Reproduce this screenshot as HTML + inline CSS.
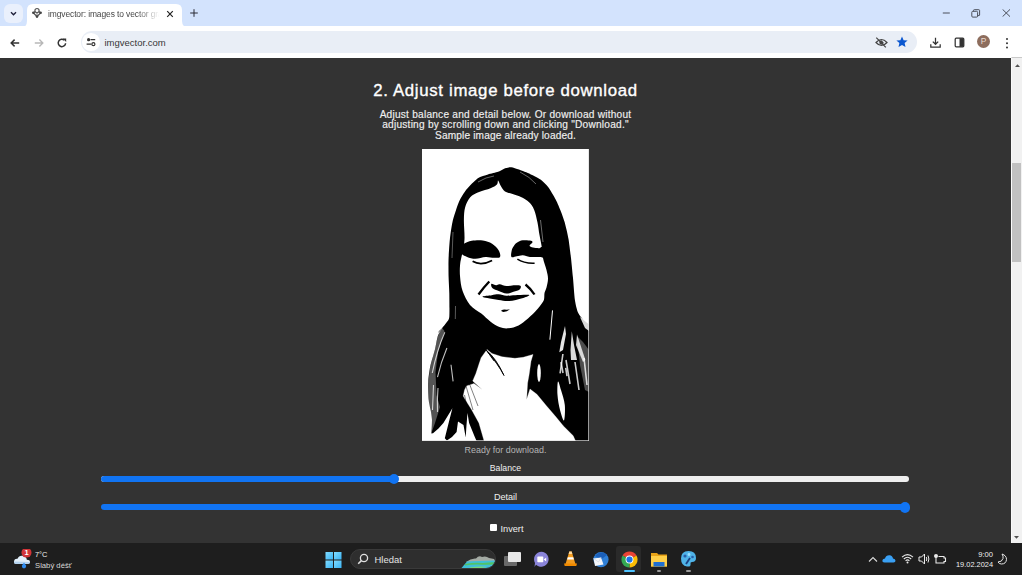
<!DOCTYPE html>
<html><head><meta charset="utf-8">
<style>
*{margin:0;padding:0;box-sizing:border-box}
html,body{width:1024px;height:575px;overflow:hidden;background:#fff;font-family:"Liberation Sans",sans-serif}
.abs{position:absolute}
#tabstrip{left:0;top:0;width:1022px;height:26px;background:#d3e3fd}
#toolbar{left:0;top:28px;width:1022px;height:29px;background:#fff}
#content{left:0;top:58px;width:1011px;height:485px;background:#333}
.cin{position:absolute;left:0;top:-1px;width:1011px;height:486px}
#sb{left:1011px;top:57px;width:11px;height:486px;background:#f1f1f1;border-left:1px solid #fafafa;border-top:1px solid #c9c9c9}
#taskbar{left:0;top:543px;width:1022px;height:32px;background:#1e1e1e}
.t{position:absolute;white-space:nowrap;color:#fff}
</style></head><body>
<div id="tabstrip" class="abs">
  <div class="abs" style="left:4px;top:4.2px;width:19.4px;height:19.2px;border-radius:6px;background:#eaf0fc"></div>
  <svg class="abs" style="left:9px;top:8.6px" width="9" height="9" viewBox="0 0 9 9"><path d="M2 3.2 L4.5 5.7 L7 3.2" fill="none" stroke="#1f1f3a" stroke-width="1.4"/></svg>
  <!-- tab -->
  <svg class="abs" style="left:20px;top:3px" width="170" height="25" viewBox="0 0 170 25">
    <path d="M0 25 Q7 25 7 18 L7 7 Q7 1 13 1 L156 1 Q162 1 162 7 L162 18 Q162 25 170 25 Z" fill="#fff"/>
  </svg>
  <svg class="abs" style="left:31px;top:6px" width="12" height="13" viewBox="0 0 12 13"><circle cx="6" cy="4.6" r="2.1" fill="none" stroke="#555" stroke-width="1.2"/><path d="M4.2 5.6 L2.3 6.8 L6 10.6 L9.7 6.8 L7.8 5.6" fill="none" stroke="#555" stroke-width="1.3"/><path d="M6 6.7 L6 9" stroke="#777" stroke-width="1"/><circle cx="2.4" cy="6.8" r="1.3" fill="#444"/><circle cx="9.6" cy="6.8" r="1.3" fill="#444"/><circle cx="6" cy="10.6" r="1.3" fill="#444"/></svg>
  <div class="t" style="left:48px;top:8.6px;font-size:8.45px;letter-spacing:-0.1px;line-height:10px;color:#474747;width:114px;overflow:hidden;-webkit-mask-image:linear-gradient(90deg,#000 78%,transparent 98%)">imgvector: images to vector graphics</div>
  <svg class="abs" style="left:166px;top:9.5px" width="8" height="8" viewBox="0 0 8 8"><path d="M1.2 1.2 L6.8 6.8 M6.8 1.2 L1.2 6.8" stroke="#222" stroke-width="1.2"/></svg>
  <svg class="abs" style="left:189.3px;top:8.3px" width="10" height="10" viewBox="0 0 10 10"><path d="M5 1.2 L5 8.8 M1.2 5 L8.8 5" stroke="#2a2a35" stroke-width="1"/></svg>
  <!-- window controls -->
  <svg class="abs" style="left:942px;top:8px" width="9" height="10" viewBox="0 0 9 10"><path d="M0.8 5 L7.8 5" stroke="#4a4f5a" stroke-width="1"/></svg>
  <svg class="abs" style="left:971px;top:8.5px" width="10" height="9" viewBox="0 0 10 9"><rect x="0.8" y="2.3" width="5.8" height="5.8" rx="1" fill="none" stroke="#4a4f5a" stroke-width="1"/><path d="M2.5 2.3 L2.5 1.5 Q2.5 0.7 3.3 0.7 L7.8 0.7 Q8.6 0.7 8.6 1.5 L8.6 6 Q8.6 6.6 8 6.6 L6.6 6.6" fill="none" stroke="#4a4f5a" stroke-width="1"/></svg>
  <svg class="abs" style="left:1002px;top:8.7px" width="9" height="8" viewBox="0 0 9 8"><path d="M0.6 0.4 L8 7.6 M8 0.4 L0.6 7.6" stroke="#4a4f5a" stroke-width="1"/></svg>
</div>
<div id="toolbar" class="abs">
  <svg class="abs" style="left:9px;top:9px" width="12" height="12" viewBox="0 0 12 12"><path d="M10.2 6 L2.2 6 M5.6 2.6 L2.2 6 L5.6 9.4" fill="none" stroke="#333" stroke-width="1.5"/></svg>
  <svg class="abs" style="left:32.5px;top:9px" width="12" height="12" viewBox="0 0 12 12"><path d="M1.8 6 L9.8 6 M6.4 2.6 L9.8 6 L6.4 9.4" fill="none" stroke="#b8b8b8" stroke-width="1.4"/></svg>
  <svg class="abs" style="left:56px;top:9px" width="12" height="12" viewBox="0 0 12 12"><path d="M9.6 6.2 A3.7 3.7 0 1 1 8.4 3.2" fill="none" stroke="#333" stroke-width="1.5"/><path d="M6.8 1.6 L10.2 1.6 L10.2 5 Z" fill="#333"/></svg>
  <div class="abs" style="left:80.5px;top:3.4px;width:836.5px;height:21.6px;border-radius:11px;background:#e9eef6"></div>
  <div class="abs" style="left:82.3px;top:5.3px;width:17.5px;height:17.5px;border-radius:50%;background:#fff"></div>
  <svg class="abs" style="left:85px;top:8px" width="12" height="12" viewBox="0 0 12 12"><circle cx="3.6" cy="3.7" r="1.6" fill="#333"/><path d="M5.5 3.7 L10.2 3.7 M1.6 8.2 L6.4 8.2" stroke="#333" stroke-width="1.3"/><circle cx="8.4" cy="8.2" r="1.5" fill="none" stroke="#333" stroke-width="1.2"/></svg>
  <div class="t" style="left:104.5px;top:9.5px;font-size:9.5px;line-height:10px;color:#363636">imgvector.com</div>
  <svg class="abs" style="left:874.5px;top:9px" width="13" height="11" viewBox="0 0 13 11"><path d="M1 5.5 Q6.5 -0.5 12 5.5 Q6.5 11.5 1 5.5 Z" fill="none" stroke="#444" stroke-width="1.2"/><path d="M6.5 3.3 A2.2 2.2 0 1 0 8.7 5.5 Z" fill="#444"/><path d="M1.3 0.6 L10.8 10.4" stroke="#444" stroke-width="1.2"/></svg>
  <svg class="abs" style="left:896px;top:8px" width="12" height="12" viewBox="0 0 12 12"><path d="M6 0.5 L7.6 4.2 L11.6 4.5 L8.6 7.1 L9.5 11 L6 9 L2.5 11 L3.4 7.1 L0.4 4.5 L4.4 4.2 Z" fill="#0b57d0"/></svg>
  <svg class="abs" style="left:930px;top:8.5px" width="11" height="11" viewBox="0 0 11 11"><path d="M5.5 0.8 L5.5 7.2 M2.8 4.6 L5.5 7.3 L8.2 4.6 M0.8 7.3 L0.8 10 L10.2 10 L10.2 7.3" fill="none" stroke="#333" stroke-width="1.25"/></svg>
  <svg class="abs" style="left:954px;top:9px" width="11" height="11" viewBox="0 0 11 11"><rect x="1.2" y="1.2" width="8.6" height="8.6" rx="1" fill="none" stroke="#333" stroke-width="1.25"/><rect x="5.5" y="1.2" width="4.3" height="8.6" fill="#333"/></svg>
  <div class="abs" style="left:977px;top:7.3px;width:13px;height:13px;border-radius:50%;background:#8d6d5d"></div>
  <div class="t" style="left:980.8px;top:9.3px;font-size:8.4px;line-height:9px;color:#eadbd3">P</div>
  <div class="abs" style="left:1005.8px;top:9.6px;width:2.5px;height:2.5px;border-radius:50%;background:#333;box-shadow:0 4.2px 0 #333,0 8.4px 0 #333"></div>
</div>
<div id="content" class="abs"><div class="cin">
  <div class="t" style="left:0;width:1011px;text-align:center;top:24.6px;font-size:16.8px;line-height:17px;font-weight:400;-webkit-text-stroke:0.35px #fff;color:#fff;letter-spacing:0.68px">2. Adjust image before download</div>
  <div class="t" style="left:0;width:1011px;text-align:center;top:52.6px;font-size:10.15px;letter-spacing:0.23px;line-height:10.6px;color:#f0f0f0;-webkit-text-stroke:0.15px #f0f0f0">Adjust balance and detail below. Or download without<br>adjusting by scrolling down and clicking "Download."<br><span style="letter-spacing:0.15px">Sample image already loaded.</span></div>
  <div class="abs" id="img" style="left:422px;top:92px;width:167px;height:292px;background:#fff"><svg class="abs" style="left:0;top:0" width="167" height="292" viewBox="422 149 167 292">
<rect x="422" y="149" width="167" height="292" fill="#fff"/>
<path d="M431.0 412.0C430.7 410.6 429.0 403.5 428.7 400.0C428.4 396.5 428.0 385.7 428.2 381.7C428.4 377.7 429.5 369.8 430.3 366.1C431.1 362.4 433.9 353.5 434.8 350.0C435.7 346.5 437.0 338.5 437.8 336.0C438.6 333.5 441.0 330.1 442.0 328.5C443.0 326.9 445.6 323.8 446.5 322.5C447.4 321.2 449.0 320.4 449.3 317.0C449.6 313.6 449.4 297.7 449.3 293.0C449.2 288.3 448.7 281.2 448.6 277.1C448.5 273.0 448.4 262.4 448.6 258.0C448.8 253.6 449.4 243.2 449.9 239.0C450.4 234.8 451.5 226.3 452.5 222.0C453.5 217.7 457.2 206.1 458.8 202.3C460.4 198.5 464.2 192.4 466.4 189.6C468.6 186.8 475.3 180.0 477.8 178.2C480.3 176.4 485.6 175.1 488.0 174.4C490.4 173.7 496.3 172.4 498.1 171.8C499.9 171.2 502.3 169.7 503.2 169.3C504.1 168.9 505.1 168.2 506.0 168.0C506.9 167.8 509.8 167.0 511.3 167.2C512.8 167.4 516.8 168.8 519.0 169.6C521.2 170.4 527.9 173.0 530.4 174.2C532.9 175.4 538.4 178.0 540.5 179.5C542.6 181.0 546.3 184.7 548.1 187.1C549.9 189.5 554.3 197.0 555.8 199.8C557.3 202.6 559.8 208.6 560.8 211.2C561.8 213.8 563.7 218.8 564.6 222.0C565.5 225.2 567.8 234.8 568.5 239.0C569.2 243.2 570.5 253.6 571.0 258.0C571.5 262.4 572.4 272.2 572.9 277.1C573.4 282.0 574.3 295.9 574.9 300.0C575.5 304.1 577.0 310.2 578.0 312.5C579.0 314.8 581.9 318.3 583.3 319.8C584.7 321.3 589.2 324.4 590.0 325.0L590.0 442.0L484.4 442.0L477.0 442.0L474.7 436.8L469.1 422.9L467.5 413.0L466.5 425.0L465.7 437.5L463.5 425.0L458.0 421.5L456.6 432.0L452.0 437.0L446.9 440.5L444.8 438.2L449.0 421.5L452.4 408.3L443.4 422.9L438.5 428.4L433.0 433.3L431.4 433.5L432.0 420.0Z" fill="#000"/>
<path d="M533.0 354.4 L531.0 361.2 L529.1 374.8 L527.6 383.0 L526.6 399.6 L530.0 389.0 L536.9 394.3 L546.6 406.0 L555.0 415.8 L563.4 426.0 L573.2 435.7 L576.0 442.0 L484.4 442.0 L478.9 422.9 L471.2 409.0 L465.5 400.0 L463.2 396.0 L464.5 390.0 L466.5 385.9 L474.0 383.5 L482.1 389.5 L472.7 381.0 L475.9 373.4 L479.0 364.0 L481.1 357.7 L487.0 349.5 L492.0 353.5 L502.0 356.7 L515.0 358.3 L523.2 357.3Z" fill="#fff" stroke="#fff" stroke-width="0.3"/>
<path d="M498.1 180.5C498.7 180.7 499.6 184.0 500.7 185.8C501.8 187.6 503.0 190.1 505.0 191.5C507.0 192.9 509.9 193.1 512.6 194.0C515.4 194.9 518.8 195.8 521.5 197.2C524.2 198.6 527.0 200.2 529.1 202.3C531.2 204.4 532.8 206.6 534.2 209.9C535.6 213.2 536.5 217.8 537.4 222.0C538.3 226.2 538.8 231.1 539.5 235.0C540.2 238.9 540.9 241.6 541.5 245.4C542.1 249.2 542.2 253.9 543.0 258.0C543.8 262.1 545.7 266.6 546.5 270.0C547.3 273.4 548.0 275.8 548.0 278.7C548.0 281.6 547.1 285.0 546.5 287.4C545.9 289.8 544.9 290.9 544.5 293.0C544.1 295.1 544.6 297.8 543.9 300.0C543.1 302.2 541.4 304.1 540.0 306.0C538.6 307.9 537.5 309.2 535.5 311.3C533.5 313.4 530.8 316.1 528.0 318.5C525.2 320.9 521.8 323.8 518.5 325.4C515.2 327.0 511.6 328.0 508.4 328.3C505.2 328.6 502.4 328.2 499.4 327.1C496.4 326.0 493.3 323.8 490.3 321.5C487.3 319.2 484.7 316.4 481.3 313.6C477.9 310.9 473.1 308.8 470.0 305.0C466.9 301.2 464.2 295.6 462.6 291.0C461.0 286.4 460.5 281.5 460.1 277.1C459.7 272.7 459.7 268.6 460.1 264.4C460.5 260.2 461.9 255.9 462.6 251.7C463.3 247.5 464.3 244.3 464.5 239.0C464.7 233.7 463.8 225.3 463.9 220.0C464.0 214.7 464.1 211.2 465.1 207.4C466.2 203.6 467.9 199.8 470.2 197.2C472.5 194.6 475.7 193.6 479.1 192.1C482.5 190.6 487.5 189.6 490.5 188.3C493.5 187.0 495.6 185.8 496.9 184.5C498.2 183.2 497.5 180.3 498.1 180.5Z" fill="#fff"/>
<path d="M460.0 246.0C460.6 244.4 462.4 244.4 464.3 243.5C466.2 242.6 468.6 241.3 471.7 240.8C474.8 240.3 479.4 240.0 482.8 240.5C486.2 241.0 489.5 242.1 492.1 243.7C494.7 245.3 497.3 248.0 498.6 250.2C499.9 252.4 500.8 255.6 500.0 256.9C499.2 258.2 496.4 257.8 494.0 257.8C491.6 257.8 488.7 256.8 485.6 257.0C482.5 257.2 478.5 258.8 475.4 258.8C472.3 258.8 469.5 258.0 467.1 257.0C464.7 256.0 462.2 254.8 461.0 253.0C459.8 251.2 459.4 247.6 460.0 246.0Z" fill="#000"/>
<path d="M511.6 251.0C511.9 249.2 512.6 247.9 513.5 246.5C514.4 245.1 515.2 243.7 516.8 242.7C518.3 241.7 520.4 240.6 522.8 240.3C525.2 240.0 529.4 240.3 531.0 240.7C532.6 241.1 532.6 241.8 532.4 242.6C532.1 243.4 529.4 245.0 529.5 245.8C529.6 246.6 531.4 247.2 533.0 247.6C534.6 248.0 537.9 248.3 539.3 248.2C540.7 248.1 540.5 246.9 541.5 247.0C542.5 247.1 544.6 247.2 545.0 249.0C545.4 250.8 544.8 256.2 544.0 257.5C543.2 258.8 542.9 257.1 540.5 257.0C538.1 256.9 532.9 257.2 529.9 256.9C526.9 256.6 525.0 255.3 522.8 255.2C520.6 255.1 518.7 256.0 516.8 256.3C514.9 256.6 512.4 257.9 511.5 257.0C510.6 256.1 511.3 252.8 511.6 251.0Z" fill="#000"/>
<path d="M472.6 261.3 Q481 266.2 492.1 260.4" fill="none" stroke="#000" stroke-width="1.7"/>
<path d="M517.4 259.2 Q524 263.6 534.6 263.2" fill="none" stroke="#000" stroke-width="1.5"/>
<path d="M491.3 283.9C491.9 283.4 494.7 285.1 496.1 285.2C497.5 285.3 497.9 284.1 499.6 284.3C501.3 284.5 504.2 286.0 506.5 286.1C508.8 286.2 511.2 285.3 513.5 285.2C515.8 285.1 519.4 285.0 520.4 285.7C521.4 286.4 520.8 288.6 519.6 289.6C518.5 290.6 515.7 291.1 513.5 291.7C511.3 292.3 509.0 293.6 506.5 293.5C504.0 293.4 501.0 291.8 498.7 290.9C496.4 290.0 493.8 289.5 492.6 288.3C491.4 287.1 490.7 284.4 491.3 283.9Z" fill="#000"/>
<path d="M478.5 294.5 Q484 287 489.3 281.5" fill="none" stroke="#000" stroke-width="2.3"/>
<path d="M525.5 284.5 Q531 289 534.5 294.5" fill="none" stroke="#000" stroke-width="2.3"/>
<path d="M482.6 296.5C483.3 296.0 489.0 295.6 491.7 295.2C494.4 294.8 496.2 294.2 498.7 294.3C501.2 294.4 503.8 295.6 506.5 295.7C509.2 295.8 511.4 295.3 515.2 295.2C519.0 295.1 527.9 294.5 529.1 295.0C530.3 295.5 525.5 297.2 522.2 298.2C518.9 299.2 513.0 300.7 509.1 301.0C505.2 301.3 502.3 300.5 498.7 300.0C495.1 299.5 490.1 298.6 487.4 298.0C484.7 297.4 481.9 297.0 482.6 296.5Z" fill="#000"/>
<path d="M501 310.8 Q503.5 308.8 506.5 309.8 Q509 309.6 510 309.2 Q507 311.8 503.5 312 Q501.8 311.8 501 310.8 Z" fill="#000"/>
<path d="M486.3 350.2 Q496 358 504 375.5 Q498 364 486.3 350.2 Z" fill="#000" stroke="#000" stroke-width="0.9"/>
<path d="M486.6 350.4 L494 360.9" stroke="#000" stroke-width="1"/>
<path d="M558.0 381.5C558.6 380.7 559.9 386.1 561.0 390.0C562.1 393.9 564.3 399.9 564.8 405.0C565.3 410.1 564.8 419.6 564.0 420.4C563.2 421.2 561.1 414.2 560.0 410.0C558.9 405.8 557.8 399.8 557.5 395.0C557.2 390.2 557.4 382.3 558.0 381.5Z" fill="#fff"/>
<ellipse cx="539" cy="373" rx="1.8" ry="9" fill="#fff"/>
<path d="M552.5 310.4 L549.9 339.7" stroke="#fff" stroke-width="1"/>
<path d="M540.5 220 L543 242" stroke="#fff" stroke-width="0.7" opacity="0.6"/>
<path d="M565 326 L561 342 L559.3 352.2 L563 350 L566 334 Z" fill="#fff" opacity="0.9"/>
<path d="M571.8 331.3 L570.5 350 L571 360 L577 360 L574 345 Z" fill="#fff" opacity="0.85"/>
<path d="M577 334.4 L585.4 360 L583 362 L576 345 Z" fill="#fff" opacity="0.8"/>
<path d="M561 362 L563 373 M566 360 L570 384 M575 362 L579 390 M584 358 L587 385" stroke="#fff" stroke-width="1.6" opacity="0.8"/>
<path d="M580 317 L589 322 L589 331 L585 328 Z" fill="#fff" opacity="0.85"/><path d="M577 336 L583 342 L589 350 L589 392 L585 390 L580 365 Z" fill="#fff" opacity="0.3"/><path d="M562.9 354 L560.1 373.4 M565.7 367.9 L567 376.2" stroke="#fff" stroke-width="1.6" opacity="0.8"/>
<path d="M453 232 L452 258 M455.5 306 L455.3 319" stroke="#fff" stroke-width="0.7" opacity="0.5"/><path d="M446 325 L438.5 332 M447 327 L440 336" stroke="#000" stroke-width="0.8"/>
<path d="M478 182 Q486 177 494 176 M520 172 Q530 177 536 184" stroke="#fff" stroke-width="0.8" opacity="0.5" fill="none"/>
<path d="M441.7 327.5 L444.5 331 L438 352 L435.5 372 L436.5 395 L440 407 L435 422.9 L431.6 432.6 L430.5 420 L428.5 400 L428.3 382 L430.3 366 L434.6 350.5 L437.8 336.5 Z" fill="#fff" opacity="0.33"/>
<path d="M444.8 332.3 Q437 350 432.3 373 M446.9 348 Q441 362 437.5 377.2 M451 364.7 L453.1 381.4 M433.5 385 L432.5 410 M438 388 Q437 400 437.5 412" stroke="#fff" stroke-width="1.1" opacity="0.75" fill="none"/>
<path d="M466 386 L473 410 M469.5 384 L478 406 M464.5 395 L468 412" stroke="#000" stroke-width="0.9" opacity="0.55"/>
<rect x="588.3" y="149" width="0.7" height="292" fill="#ddd"/>
<rect x="422" y="440.3" width="167" height="0.7" fill="#ddd"/>
</svg></div>
  <div class="t" style="left:0;width:1011px;text-align:center;top:389.4px;font-size:8.94px;line-height:9px;color:#b4b4b4">Ready for download.</div>
  <div class="t" style="left:0;width:1011px;text-align:center;top:407.4px;font-size:8.7px;line-height:9px;color:#f0f0f0">Balance</div>
  <div class="abs" style="left:101px;top:419px;width:808px;height:5.8px;border-radius:3px;background:#efefef"></div>
  <div class="abs" style="left:101px;top:419px;width:293px;height:5.8px;border-radius:3px 0 0 3px;background:#1174f3"></div>
  <div class="abs" style="left:389px;top:417px;width:10px;height:10px;border-radius:50%;background:#1174f3"></div>
  <div class="t" style="left:0;width:1011px;text-align:center;top:436.2px;font-size:9.1px;line-height:9px;color:#f0f0f0">Detail</div>
  <div class="abs" style="left:101px;top:447px;width:806px;height:6.2px;border-radius:3px;background:#1174f3"></div>
  <div class="abs" style="left:899.5px;top:445px;width:10.5px;height:10.5px;border-radius:50%;background:#1174f3"></div>
  <div class="abs" style="left:490px;top:466.5px;width:7px;height:7px;background:#fff;border-radius:1px"></div>
  <div class="t" style="left:500.5px;top:468.2px;font-size:9.2px;line-height:9px;color:#f0f0f0">Invert</div>
</div></div>
<div id="sb" class="abs">
  <svg class="abs" style="left:2px;top:4.5px" width="7" height="5" viewBox="0 0 7 5"><path d="M1 4 L3.5 1.2 L6 4 Z" fill="#505050"/></svg>
  <div class="abs" style="left:0px;top:105px;width:9px;height:99px;background:#c1c1c1"></div>
  <svg class="abs" style="left:1px;top:477px" width="7" height="5" viewBox="0 0 7 5"><path d="M1 1 L3.5 3.8 L6 1 Z" fill="#505050"/></svg>
</div>
<div id="taskbar" class="abs">
  <!-- weather -->
  <svg class="abs" style="left:10px;top:6px" width="26" height="22" viewBox="0 0 26 22">
    <path d="M6.5 15 Q3.5 15 4 12 Q4.5 9.5 7.5 9.8 Q9 6 13 6.8 Q16.5 7.6 16.8 10.8 Q20 10.8 20 13.2 Q20 15 17.5 15 Z" fill="#e3f0fb"/>
    <path d="M6.5 15 Q3.5 15 4 12.5 L20 13 Q20 15 17.5 15 Z" fill="#b5d3ef"/>
    <path d="M14 13.5 L16 16.5 A2.1 2.1 0 1 1 12 16.5 Z" fill="#2f8cf0"/>
    <circle cx="16.5" cy="3.6" r="5" fill="#d13438"/>
    <text x="16.5" y="6.4" font-size="7.5" font-family="Liberation Sans" fill="#fff" text-anchor="middle" font-weight="700">1</text>
  </svg>
  <div class="t" style="left:35px;top:8px;font-size:7.4px;line-height:8px;color:#f2f2f2">7°C</div>
  <div class="t" style="left:35px;top:18.5px;font-size:7.7px;line-height:8px;color:#d8d8d8">Slabý déšť</div>
  <!-- start -->
  <svg class="abs" style="left:325px;top:8.5px" width="17" height="16" viewBox="0 0 17 16">
    <defs><linearGradient id="wg" x1="0" y1="0" x2="1" y2="1"><stop offset="0" stop-color="#80dbff"/><stop offset="1" stop-color="#3ab4f6"/></linearGradient></defs>
    <rect x="0.5" y="0" width="7.5" height="7.5" fill="url(#wg)"/><rect x="9" y="0" width="7.5" height="7.5" fill="url(#wg)"/>
    <rect x="0.5" y="8.5" width="7.5" height="7.5" fill="url(#wg)"/><rect x="9" y="8.5" width="7.5" height="7.5" fill="url(#wg)"/>
  </svg>
  <!-- search -->
  <div class="abs" style="left:350px;top:5.5px;width:145.5px;height:20.5px;border-radius:10.5px;background:#2e2e2e;border:0.5px solid #3a3a3a;overflow:hidden">
    <svg class="abs" style="left:102px;top:0px" width="44" height="21" viewBox="0 0 44 21">
      <path d="M13 12 Q18 8 23 8.5 Q26 5 29 7 Q33 5.5 36 8 L41 9 L43 12 Z" fill="#a4aba4"/>
      <path d="M6 21 L14 11.5 Q24 11 44 10.5 L44 21 Z" fill="#3fbfd8"/>
      <path d="M12 14 Q22 12 30 13 Q38 12 44 12.5 L44 14.5 Q34 15 24 14.5 Q18 14.5 12 15.5 Z" fill="#52c466"/>
      <path d="M16 17.5 Q26 16 34 16.8 Q28 18.5 20 18.5 Z" fill="#7ad67a"/>
    </svg>
  </div>
  <svg class="abs" style="left:357px;top:10px" width="12" height="12" viewBox="0 0 12 12"><circle cx="7" cy="5" r="3.6" fill="none" stroke="#e0e0e0" stroke-width="1.3"/><path d="M4.4 7.6 L1.2 10.8" stroke="#e0e0e0" stroke-width="1.5"/></svg>
  <div class="t" style="left:374.5px;top:11.7px;font-size:9.45px;line-height:10px;color:#e4e4e4">Hledat</div>
  <!-- task view -->
  <div class="abs" style="left:504px;top:12.5px;width:12.5px;height:10px;background:#6a6a6a;border-radius:1px"></div>
  <div class="abs" style="left:508px;top:8.5px;width:13px;height:10.7px;background:#e8e8e8;border-radius:1px"></div>
  <!-- teams -->
  <svg class="abs" style="left:533px;top:8px" width="17" height="17" viewBox="0 0 17 17"><path d="M8.5 0.8 A7.5 7.5 0 1 1 3 13.8 L1.5 16 L2 12 A7.5 7.5 0 0 1 8.5 0.8 Z" fill="#8a84d9"/><rect x="4.3" y="5.6" width="6" height="5.6" rx="0.8" fill="#fff"/><path d="M10.8 8.4 L13.2 6.4 L13.2 10.4 Z" fill="#fff"/></svg>
  <!-- vlc -->
  <svg class="abs" style="left:563px;top:7.5px" width="15" height="16" viewBox="0 0 15 16"><path d="M6.3 0.5 L8.7 0.5 L12.5 13 L2.5 13 Z" fill="#f29b1e"/><path d="M6.3 0.5 L8.7 0.5 L9.3 3 L5.7 3 Z" fill="#fcd9a0"/><path d="M4.8 6.2 L10.2 6.2 L10.9 8.6 L4.1 8.6 Z" fill="#fff"/><path d="M1 12.6 L14 12.6 L13.3 15 L1.7 15 Z" fill="#f08a00"/></svg>
  <!-- outlook/mail -->
  <svg class="abs" style="left:591.5px;top:7.5px" width="17" height="18" viewBox="0 0 17 18"><circle cx="9" cy="8.6" r="7.6" fill="#2f7fd6"/><path d="M3 5 A7.6 7.6 0 0 1 15 4 L9 8.6 Z" fill="#1b5fb8"/><path d="M1.5 7.5 L9 6.5 L11.5 13.5 L3 15 Z" fill="#f4f6fa"/><path d="M1.5 7.5 L6.5 11 L9 6.5" fill="none" stroke="#cfd8e6" stroke-width="0.8"/></svg>
  <!-- chrome -->
  <div class="abs" style="left:616px;top:3px;width:24.5px;height:26px;border-radius:3px;background:#2a2a2a"></div>
  <svg class="abs" style="left:621px;top:7.7px" width="17" height="17" viewBox="-8 -8 16 16"><path d="M0 0 L-6.58 -3.80 A7.6 7.6 0 0 1 6.58 -3.80 Z" fill="#ea4335"/><path d="M0 0 L6.58 -3.80 A7.6 7.6 0 0 1 0.00 7.60 Z" fill="#fbbc04"/><path d="M0 0 L0.00 7.60 A7.6 7.6 0 0 1 -6.58 -3.80 Z" fill="#34a853"/><circle r="3.7" fill="#fff"/><circle r="2.9" fill="#1a73e8"/></svg>
  <div class="abs" style="left:624px;top:26.7px;width:11px;height:2.2px;border-radius:1px;background:#4cc2ff"></div>
  <!-- folder -->
  <svg class="abs" style="left:651px;top:8.5px" width="16" height="15" viewBox="0 0 16 15"><path d="M0 1 L6 1 L7.5 2.5 L16 2.5 L16 14.5 L0 14.5 Z" fill="#e8a317"/><rect x="0" y="4" width="16" height="10.5" fill="#ffcf48"/><rect x="2.5" y="10" width="11" height="4.5" fill="#1f6fd1"/></svg>
  <div class="abs" style="left:656.8px;top:26.5px;width:4.5px;height:2px;border-radius:1px;background:#9a9a9a"></div>
  <!-- paint -->
  <svg class="abs" style="left:680px;top:7.3px" width="17" height="18" viewBox="0 0 17 18"><path d="M8.5 1 Q16 1 16 8 Q16 12 12 12 Q10 12 10.5 14 Q11 17 7 16.5 Q1 15.5 1 8.5 Q1 1 8.5 1 Z" fill="#4fb3e8"/><circle cx="5" cy="6" r="1.6" fill="#2a5fa8"/><circle cx="9" cy="4.5" r="1.4" fill="#9be0ff"/><circle cx="12.5" cy="7" r="1.3" fill="#2a5fa8"/><path d="M6 14 L10 8" stroke="#1b3f80" stroke-width="1.8"/></svg>
  <div class="abs" style="left:685.5px;top:26.5px;width:5px;height:2px;border-radius:1px;background:#9a9a9a"></div>
  <!-- tray -->
  <svg class="abs" style="left:868px;top:12.5px" width="10" height="7" viewBox="0 0 10 7"><path d="M1 5.5 L5 1.5 L9 5.5" fill="none" stroke="#dadada" stroke-width="1.1"/></svg>
  <svg class="abs" style="left:882px;top:11px" width="14" height="9" viewBox="0 0 14 9"><path d="M2.5 8.5 Q0 8.5 0.5 6 Q1 4.5 3 4.5 Q4 1 7.5 1.2 Q10.5 1.5 11 4.5 Q13.5 4.7 13.5 6.7 Q13.5 8.5 11.5 8.5 Z" fill="#3aa0f3"/></svg>
  <svg class="abs" style="left:901px;top:10px" width="13" height="11" viewBox="0 0 13 11"><path d="M1 4.2 Q6.5 -1 12 4.2 M2.8 6 Q6.5 2.5 10.2 6 M4.6 7.8 Q6.5 6 8.4 7.8" fill="none" stroke="#eaeaea" stroke-width="1.1"/><circle cx="6.5" cy="9.6" r="1" fill="#eaeaea"/></svg>
  <svg class="abs" style="left:917.5px;top:10px" width="13" height="12" viewBox="0 0 13 12"><path d="M1 4 L3.5 4 L6.5 1 L6.5 11 L3.5 8 L1 8 Z" fill="none" stroke="#eaeaea" stroke-width="1"/><path d="M8.3 4 Q9.3 6 8.3 8 M10 2.5 Q11.8 6 10 9.5" fill="none" stroke="#eaeaea" stroke-width="1"/></svg>
  <svg class="abs" style="left:933px;top:9.5px" width="14" height="12" viewBox="0 0 14 12"><circle cx="3" cy="3" r="2" fill="#eaeaea"/><path d="M3 4 L3 10 L11 10 L11 8.5 L12.5 8.5 L12.5 5 L11 5 L11 3.5 L5.5 3.5" fill="none" stroke="#eaeaea" stroke-width="1.1"/></svg>
  <div class="t" style="left:950px;top:7.5px;width:43px;text-align:right;font-size:7.6px;line-height:8px;color:#f0f0f0">9:00</div>
  <div class="t" style="left:950px;top:17.5px;width:43px;text-align:right;font-size:7.4px;line-height:8px;color:#f0f0f0">19.02.2024</div>
  <svg class="abs" style="left:997px;top:10px" width="11" height="12" viewBox="0 0 11 12"><path d="M5 1 Q9.5 2.5 9.5 6.5 Q9 11 4.5 11 Q2 11 1 9 Q5 9 6 5.5 Q6.5 3 5 1 Z" fill="none" stroke="#e6e6e6" stroke-width="1"/></svg>
</div>
</body></html>
